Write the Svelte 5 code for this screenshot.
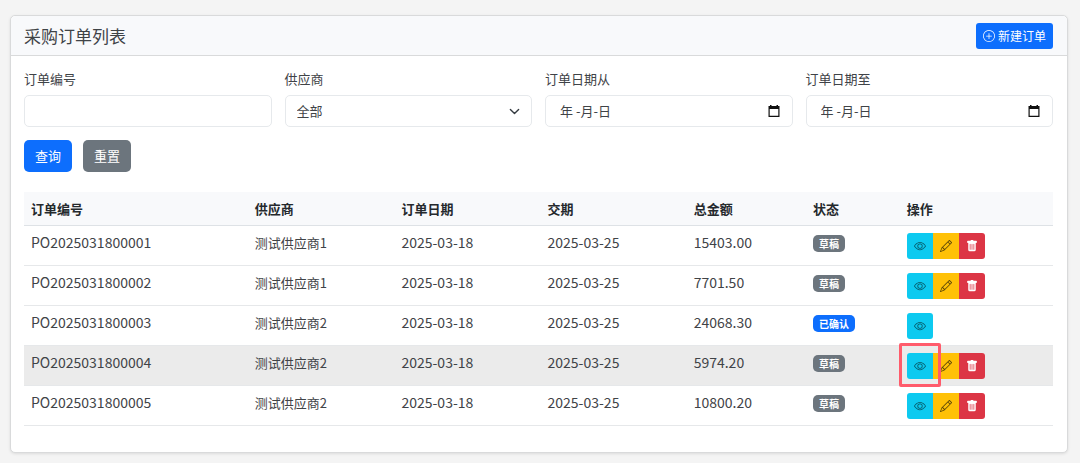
<script lang="ts">
	interface Order {
		no: string;
		supplier: string;
		orderDate: string;
		dueDate: string;
		total: string;
		confirmed: boolean;
	}

	const orders: Order[] = [
		{ no: 'PO2025031800001', supplier: '测试供应商1', orderDate: '2025-03-18', dueDate: '2025-03-25', total: '15403.00', confirmed: false },
		{ no: 'PO2025031800002', supplier: '测试供应商1', orderDate: '2025-03-18', dueDate: '2025-03-25', total: '7701.50', confirmed: false },
		{ no: 'PO2025031800003', supplier: '测试供应商2', orderDate: '2025-03-18', dueDate: '2025-03-25', total: '24068.30', confirmed: true },
		{ no: 'PO2025031800004', supplier: '测试供应商2', orderDate: '2025-03-18', dueDate: '2025-03-25', total: '5974.20', confirmed: false },
		{ no: 'PO2025031800005', supplier: '测试供应商2', orderDate: '2025-03-18', dueDate: '2025-03-25', total: '10800.20', confirmed: false }
	];

	const dateFields = [
		{ id: 'date-from', label: '订单日期从' },
		{ id: 'date-to', label: '订单日期至' }
	];

	let active = $state('PO2025031800004');
	let orderNo = $state('');
</script>

<main class="card">
	<header class="card-header">
		<h1>采购订单列表</h1>
		<button type="button" class="btn btn-primary btn-new">
			<svg viewBox="0 0 16 16" width="12" height="12" fill="currentColor" aria-hidden="true">
				<path d="M8 15A7 7 0 1 1 8 1a7 7 0 0 1 0 14m0 1A8 8 0 1 0 8 0a8 8 0 0 0 0 16" />
				<path d="M8 4a.5.5 0 0 1 .5.5v3h3a.5.5 0 0 1 0 1h-3v3a.5.5 0 0 1-1 0v-3h-3a.5.5 0 0 1 0-1h3v-3A.5.5 0 0 1 8 4" />
			</svg>
			新建订单
		</button>
	</header>

	<div class="card-body">
		<form class="filters" onsubmit={(e) => e.preventDefault()}>
			<div class="field">
				<label for="order-no">订单编号</label>
				<input id="order-no" class="control" type="text" bind:value={orderNo} />
			</div>
			<div class="field">
				<label for="supplier">供应商</label>
				<select id="supplier" class="control">
					<option>全部</option>
				</select>
			</div>
			{#each dateFields as field (field.id)}
				<div class="field">
					<label for={field.id}>{field.label}</label>
					<div class="control date-control">
						<input id={field.id} type="text" placeholder="年 -月-日" />
						<button type="button" class="picker" aria-label="日期">
							<svg viewBox="0 0 12 13" width="12" height="13" aria-hidden="true">
								<path d="M2 0h1.500v1h5V0H10v1h1.500v11H.5V1H2zM1.700 4v6.800h8.600V4z" fill="#111" fill-rule="evenodd" />
							</svg>
						</button>
					</div>
				</div>
			{/each}
			<div class="form-actions">
				<button type="submit" class="btn btn-primary">查询</button>
				<button type="reset" class="btn btn-secondary">重置</button>
			</div>
		</form>

		<table>
			<colgroup>
				<col class="col-no" />
				<col class="col-supplier" />
				<col class="col-date" />
				<col class="col-date" />
				<col class="col-total" />
				<col class="col-status" />
				<col />
			</colgroup>
			<thead>
				<tr>
					<th>订单编号</th>
					<th>供应商</th>
					<th>订单日期</th>
					<th>交期</th>
					<th>总金额</th>
					<th>状态</th>
					<th>操作</th>
				</tr>
			</thead>
			<tbody>
				{#each orders as order (order.no)}
					<tr class:active={order.no === active}>
						<td class="num">{order.no}</td>
						<td>{order.supplier}</td>
						<td class="num">{order.orderDate}</td>
						<td class="num">{order.dueDate}</td>
						<td class="num">{order.total}</td>
						<td>
							<span class="badge" class:confirmed={order.confirmed}>
								{order.confirmed ? '已确认' : '草稿'}
							</span>
						</td>
						<td>
							<div class="btn-group">
								<button type="button" class="act view" aria-label="查看" onclick={() => (active = order.no)}>
									<svg viewBox="0 0 16 16" width="12" height="12" fill="currentColor" aria-hidden="true">
										<path d="M16 8s-3-5.500-8-5.500S0 8 0 8s3 5.500 8 5.500S16 8 16 8M1.173 8a13 13 0 0 1 1.660-2.043C4.120 4.668 5.880 3.500 8 3.500s3.879 1.168 5.168 2.457A13 13 0 0 1 14.828 8q-.086.130-.195.288c-.335.480-.830 1.120-1.465 1.755C11.879 11.332 10.119 12.500 8 12.500s-3.879-1.168-5.168-2.457A13 13 0 0 1 1.172 8z" />
										<path d="M8 5.500a2.500 2.500 0 1 0 0 5 2.500 2.500 0 0 0 0-5M4.500 8a3.500 3.500 0 1 1 7 0 3.500 3.500 0 0 1-7 0" />
									</svg>
								</button>
								{#if !order.confirmed}
									<button type="button" class="act edit" aria-label="编辑">
										<svg viewBox="0 0 16 16" width="12" height="12" fill="currentColor" aria-hidden="true">
											<path d="M12.146.146a.5.5 0 0 1 .708 0l3 3a.5.5 0 0 1 0 .708l-10 10a.5.5 0 0 1-.168.110l-5 2a.5.5 0 0 1-.650-.650l2-5a.5.5 0 0 1 .110-.168zM11.207 2.500 13.500 4.793 14.793 3.500 12.500 1.207zm1.586 3L10.500 3.207 4 9.707V10h.5a.5.5 0 0 1 .5.5v.5h.5a.5.5 0 0 1 .5.5v.5h.293zm-9.761 5.175-.106.106-1.528 3.821 3.821-1.528.106-.106A.5.5 0 0 1 5 12.500V12h-.5a.5.5 0 0 1-.5-.5V11h-.5a.5.5 0 0 1-.468-.325" />
										</svg>
									</button>
									<button type="button" class="act remove" aria-label="删除">
										<svg viewBox="0 0 16 16" width="12" height="12" fill="currentColor" aria-hidden="true">
											<path d="M2.500 1a1 1 0 0 0-1 1v1a1 1 0 0 0 1 1H3v9a2 2 0 0 0 2 2h6a2 2 0 0 0 2-2V4h.5a1 1 0 0 0 1-1V2a1 1 0 0 0-1-1H10a1 1 0 0 0-1-1H7a1 1 0 0 0-1 1zm3 4a.5.5 0 0 1 .5.5v7a.5.5 0 0 1-1 0v-7a.5.5 0 0 1 .5-.5M8 5a.5.5 0 0 1 .5.5v7a.5.5 0 0 1-1 0v-7A.5.5 0 0 1 8 5m3 .5v7a.5.5 0 0 1-1 0v-7a.5.5 0 0 1 1 0" />
										</svg>
									</button>
								{/if}
								{#if order.no === active}
									<span class="marker"></span>
								{/if}
							</div>
						</td>
					</tr>
				{/each}
			</tbody>
		</table>
	</div>
</main>

<style>
	:global(body) {
		background: #f4f4f4;
		color: #3f4347;
		font-family: 'Noto Sans CJK SC', sans-serif;
		font-size: 13px;
		line-height: 20px;
	}

	button,
	input,
	select {
		font: inherit;
		color: inherit;
	}

	.card {
		margin: 15px 12px 10px 10px;
		background: #fff;
		border: 1px solid #d9dadb;
		border-radius: 5px;
		box-shadow: 0 1px 3px rgba(0, 0, 0, 0.1);
	}

	.card-header {
		display: flex;
		align-items: center;
		justify-content: space-between;
		padding: 7px 14px 6px 13px;
		background: #f8f9fb;
		border-bottom: 1px solid #d9dadb;
		border-radius: 5px 5px 0 0;
	}

	h1 {
		margin: 0;
		font-size: 17px;
		font-weight: 400;
	}

	.card-body {
		padding: 13px 14px 26px 13px;
	}

	.btn {
		padding: 6px 11px;
		border: 0;
		border-radius: 5px;
		color: #fff;
		cursor: pointer;
	}

	.btn-primary {
		background: #0d6efd;
	}

	.btn-secondary {
		background: #6c757d;
	}

	.btn-new {
		display: flex;
		align-items: center;
		gap: 3px;
		padding: 3px 7px;
		border-radius: 3px;
		font-size: 12px;
	}

	.filters {
		display: grid;
		grid-template-columns: repeat(4, 1fr);
		gap: 13px;
		margin-bottom: 20px;
	}

	.field {
		display: flex;
		flex-direction: column;
		gap: 6px;
		min-width: 0;
	}

	.control {
		box-sizing: border-box;
		width: 100%;
		height: 32px;
		padding: 0 11px;
		background: #fff;
		border: 1px solid #e6e9ec;
		border-radius: 5px;
	}

	select.control {
		appearance: none;
		background: #fff url("data:image/svg+xml,%3Csvg xmlns='http://www.w3.org/2000/svg' viewBox='0 0 16 16'%3E%3Cpath fill='none' stroke='%23343a40' stroke-linecap='round' stroke-linejoin='round' stroke-width='2' d='m2 5 6 6 6-6'/%3E%3C/svg%3E") no-repeat right 11px center / 11px 11px;
	}

	.date-control {
		display: flex;
		align-items: center;
		padding: 0 12px 0 14px;
	}

	.date-control input {
		flex: 1;
		min-width: 0;
		padding: 0;
		border: 0;
		outline: 0;
		background: none;
	}

	.date-control input::placeholder {
		color: inherit;
		opacity: 1;
	}

	.picker {
		display: flex;
		padding: 0;
		border: 0;
		background: none;
	}

	.form-actions {
		grid-column: 1 / -1;
		display: flex;
		gap: 11px;
	}

	table {
		width: 100%;
		table-layout: fixed;
		border-collapse: separate;
		border-spacing: 0;
	}

	.col-no { width: 21.750%; }
	.col-supplier { width: 14.250%; }
	.col-date { width: 14.200%; }
	.col-total { width: 11.600%; }
	.col-status { width: 9.100%; }

	th,
	td {
		padding: 7px 7px 6px;
		text-align: left;
		vertical-align: top;
		border-bottom: 1px solid #e6e8ea;
	}

	th {
		background: #f8f9fb;
		border-bottom-color: #dee2e6;
		color: #25292d;
		font-weight: 700;
	}

	.num {
		font-size: 14px;
		line-height: 18px;
	}

	.active td {
		background: #ebebeb;
	}

	.badge {
		display: block;
		width: fit-content;
		margin-top: 2px;
		padding: 0 6px;
		border-radius: 5px;
		background: #6c757d;
		color: #fff;
		font-size: 10px;
		font-weight: 700;
		line-height: 17px;
	}

	.badge.confirmed {
		background: #0d6efd;
	}

	.btn-group {
		position: relative;
		display: flex;
		width: fit-content;
		border-radius: 3px;
	}

	.act {
		display: flex;
		align-items: center;
		justify-content: center;
		width: 26px;
		height: 26px;
		padding: 0;
		border: 0;
		cursor: pointer;
	}

	.act:first-child {
		border-radius: 3px 0 0 3px;
	}

	.act:only-child {
		border-radius: 3px;
	}

	.view {
		background: #0dcaf0;
		color: #075663;
	}

	.edit {
		background: #ffc107;
		color: #5c4708;
	}

	.remove {
		background: #dc3545;
		border-radius: 0 3px 3px 0;
		color: #fff;
	}

	.marker {
		position: absolute;
		top: -10px;
		left: -8px;
		box-sizing: border-box;
		width: 42px;
		height: 44px;
		border: 3px solid #ff5b6b;
		border-radius: 2px;
		pointer-events: none;
	}
</style>
